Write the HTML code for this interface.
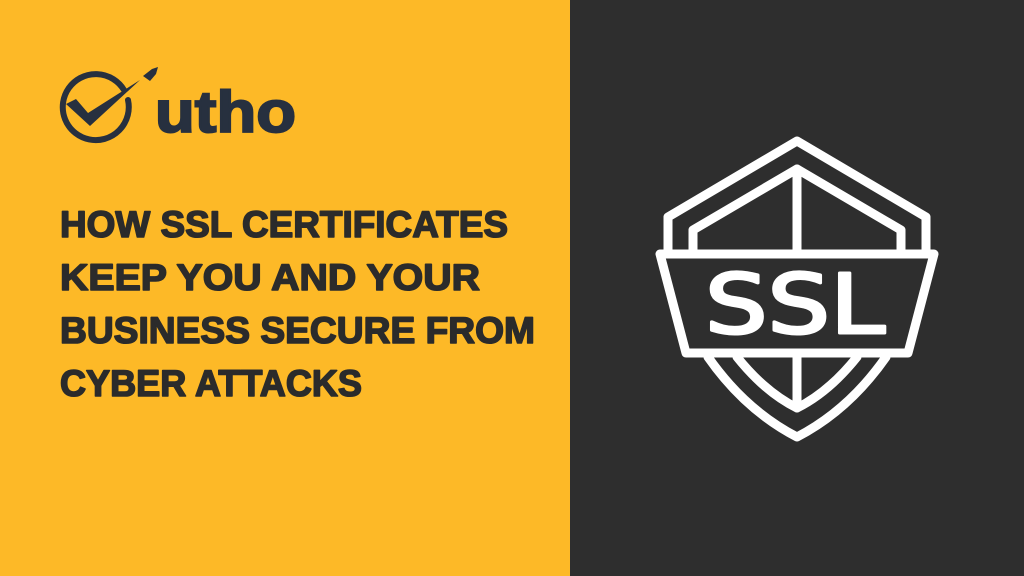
<!DOCTYPE html>
<html><head><style>
html,body{margin:0;padding:0;width:1024px;height:576px;overflow:hidden}
body{position:relative;background:#2e2e2e}
.y{position:absolute;left:0;top:0;width:570px;height:576px;background:#fdb927}
svg{position:absolute;left:0;top:0}
</style></head><body>
<div class="y"></div>
<svg width="1024" height="576" viewBox="0 0 1024 576">
  <g fill="none" stroke="#27303f" stroke-width="6" stroke-linecap="round" stroke-linejoin="round">
    <path d="M124 90 A33 33 0 1 0 128 100"/>
  </g>
  <path d="M66 104 L76 99 L88 113 L140 80 L90 126 Z" fill="#27303f"/>
  <path d="M143 76 L152 69 L158 67 L156 74 L150 81 Z" fill="#27303f"/>
  <text x="155" y="132" font-family="Liberation Sans, sans-serif" font-weight="bold" font-size="58" fill="#27303f" stroke="#27303f" stroke-width="2" textLength="141" lengthAdjust="spacingAndGlyphs">utho</text>
  <g font-family="Liberation Sans, sans-serif" font-weight="bold" font-size="37" fill="#2b2b2b" stroke="#2b2b2b" stroke-width="1.6" stroke-linejoin="round">
    <text x="60" y="237" textLength="448" lengthAdjust="spacingAndGlyphs">HOW SSL CERTIFICATES</text>
    <text x="60" y="290" textLength="420" lengthAdjust="spacingAndGlyphs">KEEP YOU AND YOUR</text>
    <text x="60" y="343" textLength="475" lengthAdjust="spacingAndGlyphs">BUSINESS SECURE FROM</text>
    <text x="60" y="396" textLength="302" lengthAdjust="spacingAndGlyphs">CYBER ATTACKS</text>
  </g>
  <g fill="none" stroke="#fff" stroke-width="9" stroke-linejoin="round" stroke-linecap="round">
    <path d="M668 252 L668 217 L797 141 L926 217 L926 252"/>
    <path d="M693 252 L693 230 L797 169 L901 230 L901 252"/>
    <line x1="797" y1="169" x2="797" y2="252"/>
    <path d="M660 254 L934 254 L908 353 L686 353 Z"/>
    <path d="M708 357 Q745 410 797 437 Q849 410 886 357"/>
    <path d="M737 357 Q765 392 797 408 Q829 392 857 357"/>
    <line x1="797" y1="357" x2="797" y2="408"/>
  </g>
  <text x="705" y="333" font-family="DejaVu Sans, sans-serif" font-size="82" fill="#fff" stroke="#fff" stroke-width="3" stroke-linejoin="round" textLength="180" lengthAdjust="spacingAndGlyphs">SSL</text>
</svg>
</body></html>
